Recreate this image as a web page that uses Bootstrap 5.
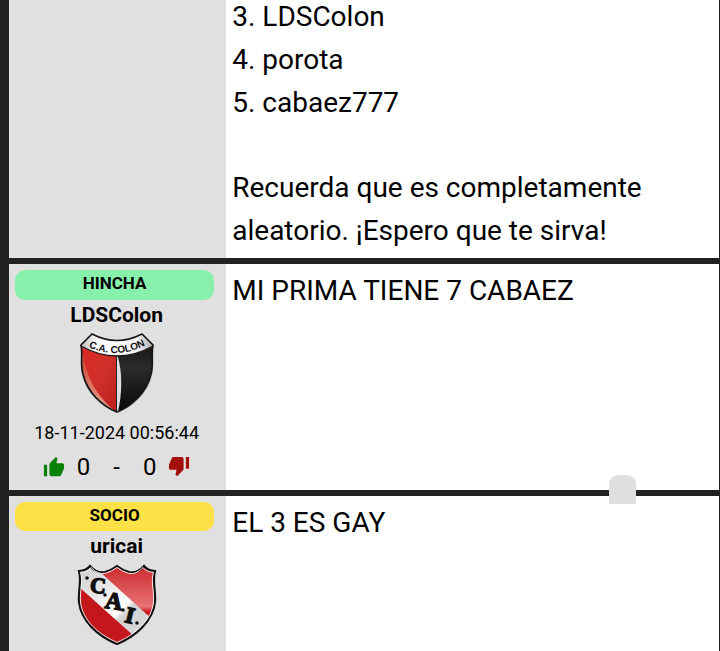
<!DOCTYPE html>
<html lang="es">
<head>
<meta charset="utf-8">
<meta name="viewport" content="width=device-width, initial-scale=1">
<title>Foro</title>
<link href="https://cdn.jsdelivr.net/npm/bootstrap@5.3.0/dist/css/bootstrap.min.css" rel="stylesheet">
<style>
body{font-family:Roboto,"Liberation Sans",sans-serif;background:#222;color:#000}
.thread{gap:6px;padding:0 1px 0 9px}
.post{background:#fff}
.post-continued{margin-top:-5px}
.author{flex:0 0 30.6%;background:#e0e0e0;padding:6px 8px 6px 6px;line-height:24px}
.rank{background:#87f0ab;border-radius:10px;font-size:17px;font-weight:700;line-height:26px;padding-bottom:4px;margin-right:4px}
.rank-socio{background:#fee047;padding-bottom:3px}
.author-name{font-size:21px;font-weight:700;line-height:30px;color:#000}
.crest{width:80px;height:84px}
.posted{font-size:18px;line-height:24px;margin-top:7px}
.votes{font-size:24px;line-height:34px;margin-top:5px;gap:12px}
.dash{margin:0 11px}
.votes svg{width:22px;height:22px;display:block}
.message{padding:5px 6px 6px;font-size:28px;line-height:43px}
.post-continued .message{padding-top:0}
.message ol{margin-bottom:42px}
.to-top{right:84px;bottom:147px;width:27px;height:29px;background:#dfdfdf;border-radius:9px 9px 0 0}
</style>
<script src="https://cdn.jsdelivr.net/npm/bootstrap@5.3.0/dist/js/bootstrap.bundle.min.js"></script>
</head>
<body class="vh-100 overflow-hidden position-relative">
<main class="thread d-flex flex-column">
  <article class="post post-continued d-flex">
    <aside class="author"></aside>
    <div class="message flex-grow-1">
      <ol class="list-unstyled"><li>3. LDSColon</li><li>4. porota</li><li>5. cabaez777</li></ol>
      <p class="mb-0">Recuerda que es completamente<br>aleatorio. ¡Espero que te sirva!</p>
    </div>
  </article>

  <article class="post d-flex">
    <aside class="author text-center">
      <div class="rank">HINCHA</div>
      <a href="#" class="author-name d-block text-decoration-none">LDSColon</a>
      <svg class="crest d-block mx-auto" viewBox="0 0 80 84" role="img" aria-label="C.A. Colón">
        <defs>
          <linearGradient id="silver" x1="0" x2="1"><stop offset="0" stop-color="#aaa"/><stop offset=".25" stop-color="#fff"/><stop offset=".75" stop-color="#f4f4f4"/><stop offset="1" stop-color="#999"/></linearGradient>
          <linearGradient id="redHalf" x1="0" y1="0" x2="1" y2="1"><stop offset="0" stop-color="#e12824"/><stop offset=".6" stop-color="#cf2f29"/><stop offset="1" stop-color="#bd1c1c"/></linearGradient>
          <linearGradient id="blackHalf" x1="0" y1="0" x2="0" y2="1"><stop offset="0" stop-color="#080808"/><stop offset=".45" stop-color="#2b2b2b"/><stop offset="1" stop-color="#060606"/></linearGradient>
          <linearGradient id="shine" x1="0" y1="0" x2="0" y2="1"><stop offset="0" stop-color="#c63f2e"/><stop offset="1" stop-color="#eda28c"/></linearGradient>
          <path id="arc" d="M11 17Q40 30 69 15"/>
          <clipPath id="colonClip"><path d="M15 4Q40 17 65 4L76 15C74 24 77 34 74 44C70 62 55 76 40 82C25 76 10 62 6 44C3 34 6 24 4 15Z"/></clipPath>
        </defs>
        <path d="M15 4Q40 17 65 4L77 15C74 24 78 34 75 45C71 63 56 77 40 83C24 77 9 63 5 45C2 34 6 24 3 15Z" fill="#777" opacity=".6"/>
        <g clip-path="url(#colonClip)">
          <path d="M0 0H40V84H0Z" fill="url(#redHalf)"/>
          <path d="M40 0H80V84H40Z" fill="url(#blackHalf)"/>
          <path d="M6 22C9 49 21 67 39 82C17 77 3 57 4 30Z" fill="url(#shine)"/>
          <path d="M40 24C46 42 45 64 41 82H39V24Z" fill="#ddd"/>
          <path d="M39.500 25V82" stroke="#222" stroke-width="1"/>
          <path d="M0 13L15 2Q40 17 65 2L80 13L75 17Q40 35 5 17Z" fill="url(#silver)"/>
        </g>
        <path d="M4 16Q40 36 76 16" fill="none" stroke="#181818" stroke-width="1.300"/>
        <path d="M15 4Q40 17 65 4L76 15C74 24 77 34 74 44C70 62 55 76 40 82C25 76 10 62 6 44C3 34 6 24 4 15Z" fill="none" stroke="#161616" stroke-width="1.600"/>
        <text font-family="Liberation Sans, Arial, sans-serif" font-size="10" font-weight="700" fill="#111" text-anchor="middle"><textPath href="#arc" startOffset="50%">C.A. COLON</textPath></text>
      </svg>
      <div class="posted">18-11-2024 00:56:44</div>
      <div class="votes d-flex justify-content-center align-items-center">
        <button type="button" class="btn p-0 border-0" aria-label="Me gusta"><svg viewBox="0 0 24 24" fill="#098109"><path d="M1 9.500h3.500V22H1zM23 10a2 2 0 0 0-2-2h-6.300l1-4.600v-.3q0-.7-.5-1.100L14.100 1 7.600 7.500A2 2 0 0 0 7 9v11a2 2 0 0 0 2 2h9a2 2 0 0 0 1.800-1.200l3-7q.2-.4.200-.8z"/></svg></button>
        <span>0</span><span class="dash">-</span><span>0</span>
        <button type="button" class="btn p-0 border-0" aria-label="No me gusta"><svg viewBox="0 0 24 24" fill="#a30f0a"><path d="M23 1h-3.500v13H23zM1 13a2 2 0 0 0 2 2h6.300l-1 4.600v.3q0 .7.500 1.100l1.100 1 6.500-6.500A2 2 0 0 0 17 14V3a2 2 0 0 0-2-2H6a2 2 0 0 0-1.800 1.200l-3 7Q1 9.600 1 10z"/></svg></button>
      </div>
    </aside>
    <div class="message flex-grow-1">MI PRIMA TIENE 7 CABAEZ</div>
  </article>

  <article class="post d-flex">
    <aside class="author text-center">
      <div class="rank rank-socio">SOCIO</div>
      <a href="#" class="author-name d-block text-decoration-none">uricai</a>
      <svg class="crest d-block mx-auto" viewBox="0 -2 80 84" role="img" aria-label="C.A. Independiente">
        <defs>
          <linearGradient id="caiRed" x1="0" y1="0" x2="0" y2="1"><stop offset="0" stop-color="#c9252a"/><stop offset=".52" stop-color="#ea7376"/><stop offset=".58" stop-color="#cb171c"/><stop offset="1" stop-color="#c5161b"/></linearGradient>
          <linearGradient id="caiBand" x1="0" y1="0" x2="1" y2="1"><stop offset="0" stop-color="#c8c8c8"/><stop offset=".6" stop-color="#fff"/><stop offset=".66" stop-color="#d2d2d2"/><stop offset="1" stop-color="#ddd"/></linearGradient>
          <path id="caiShape" d="M13 3Q20 11 28 9Q35 7 40 3Q45 7 52 9Q60 11 67 3Q71 8 78 8C75 18 79 28 78 39C76 58 59 73 40 81C21 73 4 58 2 39C1 28 5 18 2 8Q9 8 13 3Z"/>
          <clipPath id="caiClip"><use href="#caiShape"/></clipPath>
        </defs>
        <g clip-path="url(#caiClip)">
          <path d="M0 0H80V84H0Z" fill="url(#caiRed)"/>
          <path d="M0 18L60 72L40 84L0 65Z" fill="#c4171c"/>
          <path d="M0 0H13L76 57L58 74L0 22Z" fill="url(#caiBand)"/>
        </g>
        <use href="#caiShape" fill="none" stroke="#111" stroke-width="2.200"/>
        <use href="#caiShape" fill="none" stroke="#f4f4f4" stroke-width="1" transform="translate(1.600 1.600) scale(.96)"/>
        <g font-family="Liberation Serif, serif" font-weight="700" fill="#101010" stroke="#101010" stroke-width="1.400" text-anchor="middle">
          <text x="21" y="30" font-size="22" transform="rotate(5 21 23)">C</text>
          <text x="37" y="46" font-size="24" transform="rotate(8 37 38)">A</text>
          <text x="53" y="60" font-size="23" transform="rotate(14 53 52)">I</text>
        </g>
        <g fill="#111"><circle cx="10" cy="15" r="1.800"/><circle cx="28" cy="32" r="1.800"/><circle cx="46" cy="47" r="1.800"/><circle cx="60" cy="60" r="1.800"/></g>
      </svg>
    </aside>
    <div class="message flex-grow-1">EL 3 ES GAY</div>
  </article>
</main>
<button type="button" class="to-top position-absolute border-0 p-0" aria-label="Subir"></button>
</body>
</html>
